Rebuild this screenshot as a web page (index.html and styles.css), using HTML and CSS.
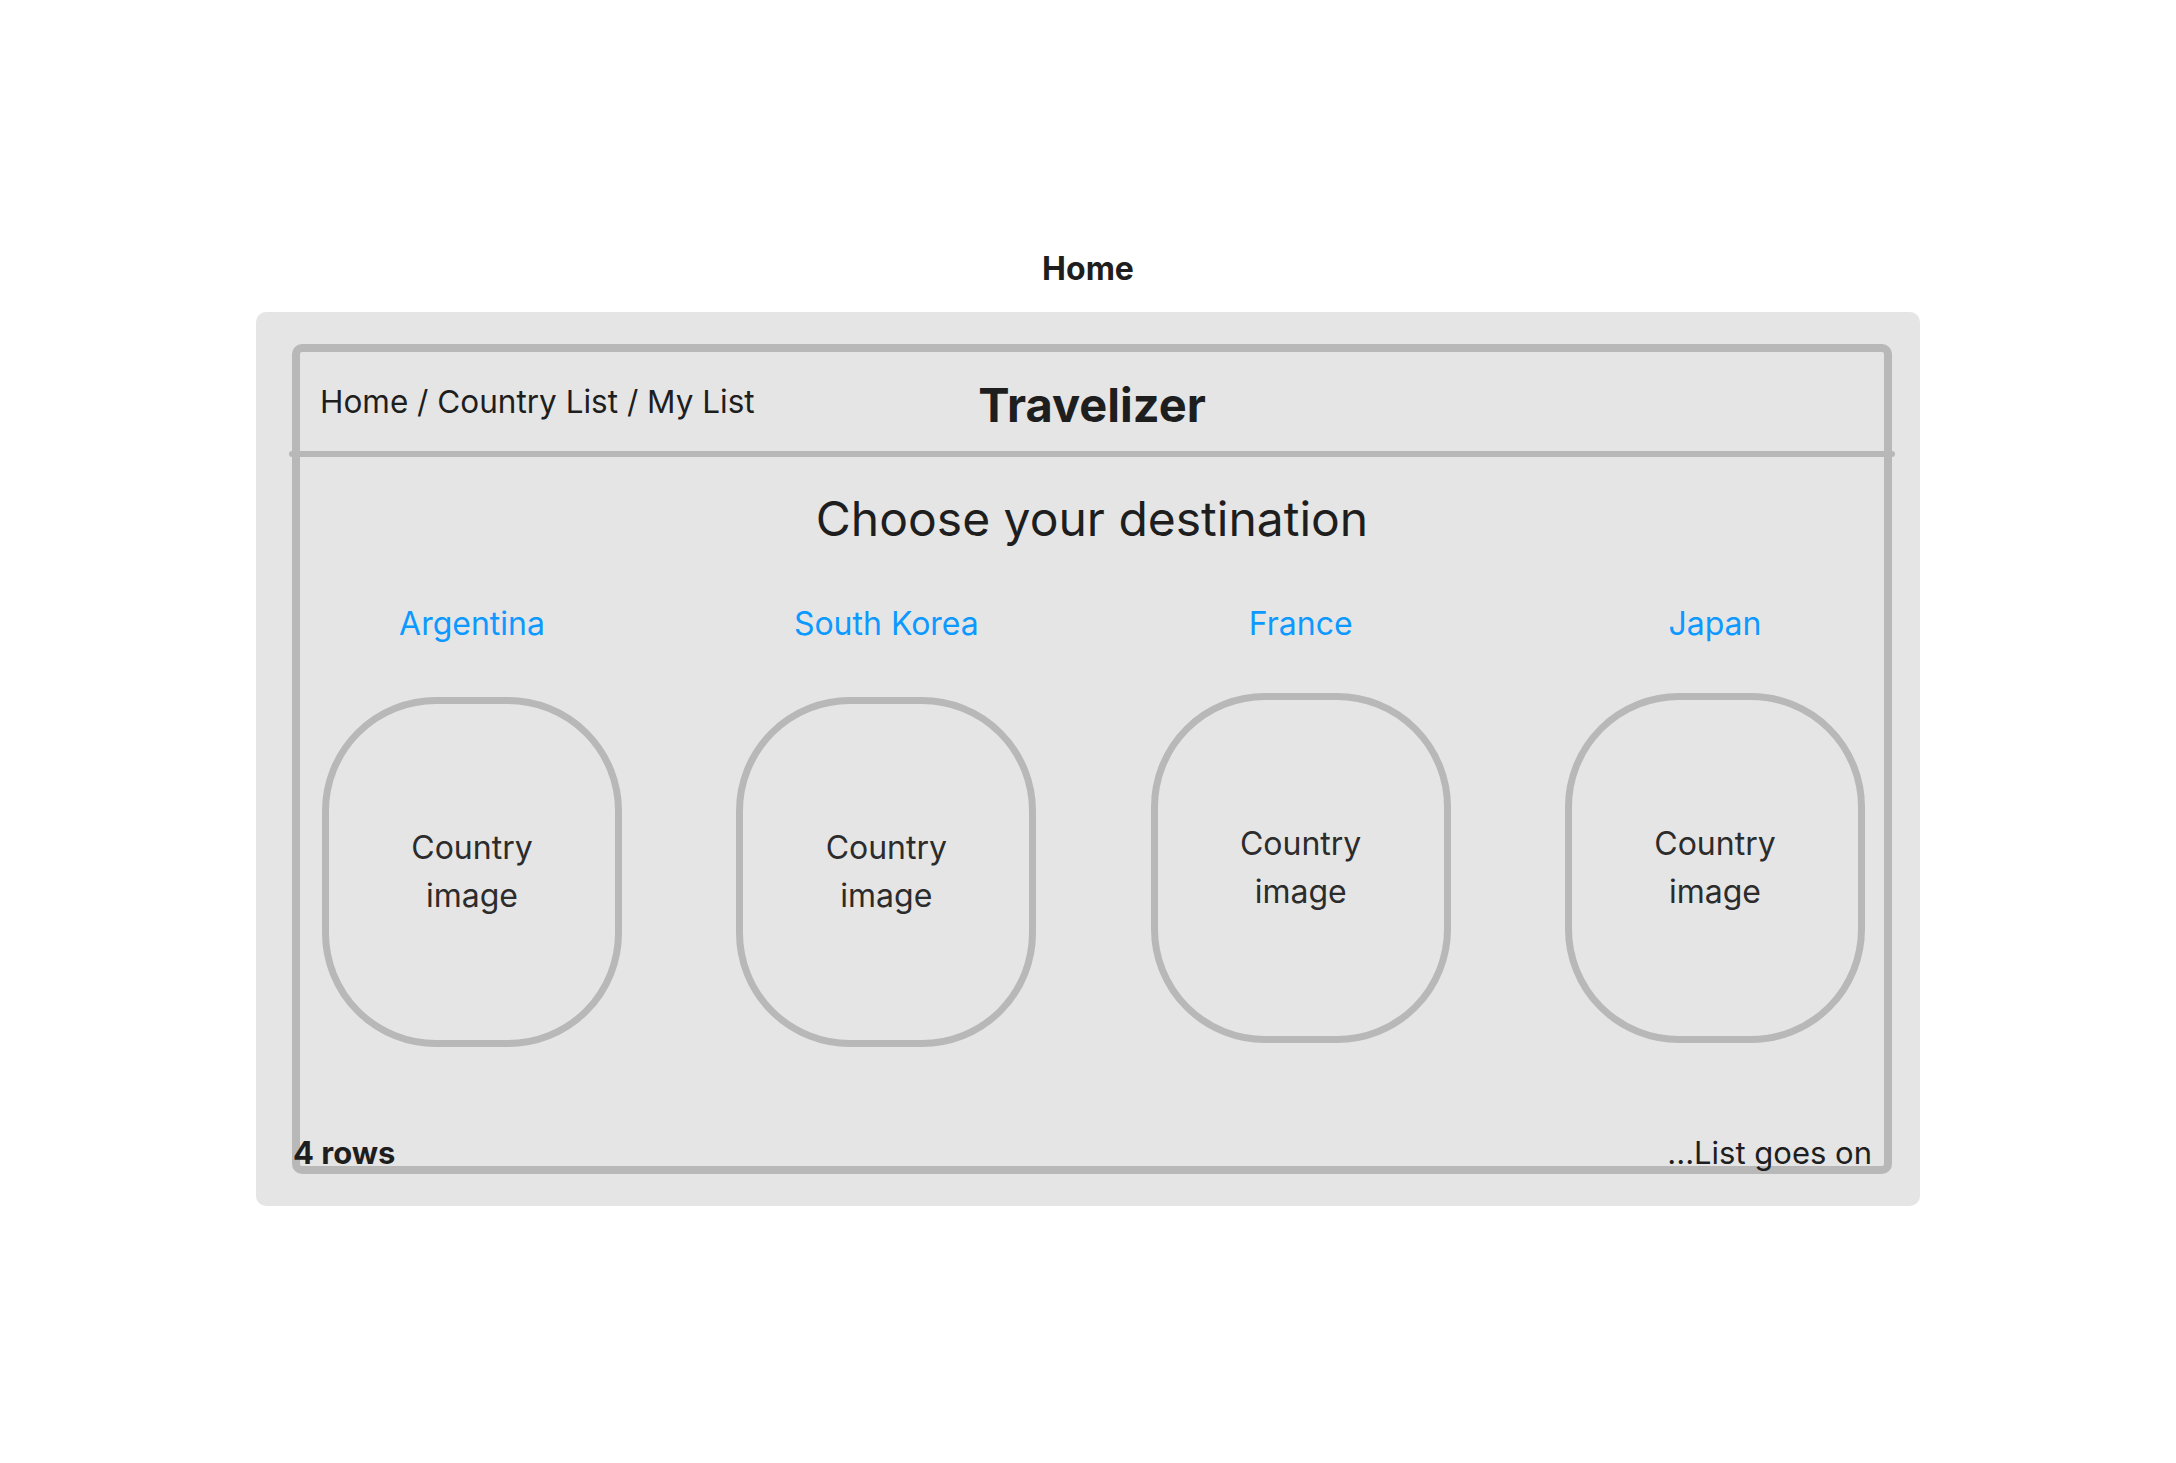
FILE: index.html
```html
<!DOCTYPE html>
<html lang="en">
<head>
    <meta charset="UTF-8">
    <meta name="viewport" content="width=device-width, initial-scale=1.0">
    <title>Home</title>
    <link rel="stylesheet" href="styles.css">
</head>
<body>
    <main class="canvas">
        <h1 class="frame-title">Home</h1>
        <section class="frame">
            <div class="wireframe">
                <header class="topbar">
                    <nav class="crumbs">Home / Country List / My List</nav>
                    <div class="brand">Travelizer</div>
                    <span></span>
                </header>
                <hr class="divider">
                <h2 class="heading">Choose your destination</h2>
                <ul class="countries">
                    <li class="country">
                        <a href="#" class="country-name">Argentina</a>
                        <div class="country-image">Country<br>image</div>
                    </li>
                    <li class="country">
                        <a href="#" class="country-name">South Korea</a>
                        <div class="country-image">Country<br>image</div>
                    </li>
                    <li class="country">
                        <a href="#" class="country-name">France</a>
                        <div class="country-image raised">Country<br>image</div>
                    </li>
                    <li class="country">
                        <a href="#" class="country-name">Japan</a>
                        <div class="country-image raised">Country<br>image</div>
                    </li>
                </ul>
                <!-- annotations sit on the bottom border -->
                <span class="note note-left">4 rows</span>
                <span class="note note-right">...List goes on</span>
            </div>
        </section>
    </main>
</body>
</html>
```

FILE: styles.css
```css
/* General Styles */
body {
    margin: 0;
    padding: 0;
    font-family: Inter, "Noto Sans", sans-serif;
    background-color: #ffffff;
    color: #1e1e1e;
}

h1, h2 {
    margin: 0;
    padding: 0;
}

.canvas {
    padding-top: 250px;
}

.frame-title {
    text-align: center;
    font-size: 32px;
    line-height: 38px;
    font-weight: 700;
    margin-bottom: 24px;
}

/* Grey frame */
.frame {
    width: 1664px;
    margin: 0 auto;
    box-sizing: border-box;
    padding: 32px 28px 32px 36px;
    background-color: #e5e5e5;
    border-radius: 10px;
}

.wireframe {
    position: relative;
    height: 830px;
    box-sizing: border-box;
    border: 8px solid #b8b8b8;
    border-radius: 10px;
}

/* Header */
.topbar {
    display: grid;
    grid-template-columns: 1fr auto 1fr;
    align-items: center;
    height: 99px;
    padding: 0 20px;
}

.crumbs {
    font-size: 31.5px;
    color: #1e1e1e;
}

.brand {
    font-size: 47px;
    font-weight: 700;
    padding-top: 5px;
}

.divider {
    height: 6px;
    margin: 0 -11px;
    border: 0;
    border-radius: 3px;
    background-color: #b8b8b8;
}

.heading {
    margin-top: 33px;
    text-align: center;
    font-size: 48px;
    line-height: 58px;
    font-weight: 400;
}

/* Country cards */
.countries {
    list-style: none;
    margin: 56px 0 0;
    padding: 0 19px 0 22px;
    display: flex;
    justify-content: space-between;
}

.country {
    display: flex;
    flex-direction: column;
    align-items: center;
}

.country-name {
    font-size: 32px;
    line-height: 39px;
    color: #0d99ff;
    text-decoration: none;
}

.country-image {
    margin-top: 54px;
    width: 300px;
    height: 350px;
    box-sizing: border-box;
    border: 7px solid #b8b8b8;
    border-radius: 114px;
    display: flex;
    align-items: center;
    justify-content: center;
    text-align: center;
    font-size: 32px;
    line-height: 48px;
    color: #2c2c2c;
}

.country-image.raised {
    margin-top: 50px;
}

/* Notes */
.note {
    position: absolute;
    bottom: -6px;
    font-size: 31px;
    line-height: 38px;
}

.note-left {
    left: -7px;
    font-weight: 700;
}

.note-right {
    right: 12px;
}
```
